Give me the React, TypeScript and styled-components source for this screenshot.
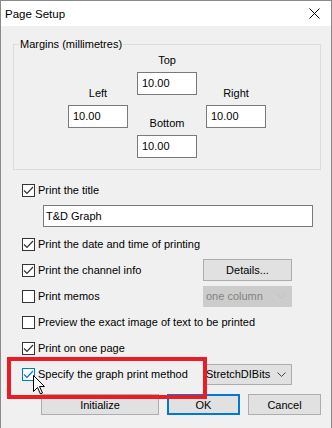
import styled, { createGlobalStyle, css } from 'styled-components';

const GlobalStyle = createGlobalStyle`
  html, body {
    margin: 0;
    padding: 0;
    background: #f0f0f0;
  }
  body {
    font-family: 'Liberation Sans', Arial, sans-serif;
    font-size: 11px;
    color: #000;
  }
`;

const CheckMark = ({ color }: { color: string }) => (
  <svg width="11" height="11" viewBox="0 0 11 11">
    <path d="M1 5.5 L4 8.5 L10 2" fill="none" stroke={color} strokeWidth="1.2" />
  </svg>
);

const Chevron = ({ color }: { color: string }) => (
  <svg width="9" height="5" viewBox="0 0 9 5">
    <path d="M0.5 0.5 L4.5 4.5 L8.5 0.5" fill="none" stroke={color} strokeWidth="1" />
  </svg>
);

type BoxProps = { checked?: boolean; hover?: boolean; label: string };

const CheckBox = ({ checked, hover, label }: BoxProps) => (
  <CheckLabel>
    <Box $hover={hover}>
      {checked && <CheckMark color={hover ? '#0078d7' : '#333'} />}
    </Box>
    {label}
  </CheckLabel>
);

const App = () => {
  return (
    <>
      <GlobalStyle />
      <Window>
        <TitleBar>
          <span>Page Setup</span>
          <CloseButton>
            <svg width="11" height="11" viewBox="0 0 11 11">
              <path d="M0.5 0.5 L10.5 10.5 M10.5 0.5 L0.5 10.5" stroke="#000" strokeWidth="1" />
            </svg>
          </CloseButton>
        </TitleBar>
        <Body>
          <GroupBox>
            <Legend>Margins (millimetres)</Legend>
            <MarginGrid>
              <SideField>
                <FieldLabel>Left</FieldLabel>
                <NumInput>10.00</NumInput>
              </SideField>
              <CenterColumn>
                <FieldLabel>Top</FieldLabel>
                <NumInput>10.00</NumInput>
                <FieldLabel $gap>Bottom</FieldLabel>
                <NumInput>10.00</NumInput>
              </CenterColumn>
              <SideField>
                <FieldLabel>Right</FieldLabel>
                <NumInput>10.00</NumInput>
              </SideField>
            </MarginGrid>
          </GroupBox>

          <Options>
            <Row>
              <CheckBox checked label="Print the title" />
            </Row>
            <TitleInput>T&amp;D Graph</TitleInput>
            <Row $first>
              <CheckBox checked label="Print the date and time of printing" />
            </Row>
            <Row>
              <CheckBox checked label="Print the channel info" />
              <PushButton>Details...</PushButton>
            </Row>
            <Row>
              <CheckBox label="Print memos" />
              <Select $disabled>
                one column
                <Chevron color="#bfbfbf" />
              </Select>
            </Row>
            <Row>
              <CheckBox label="Preview the exact image of text to be printed" />
            </Row>
            <Row>
              <CheckBox checked label="Print on one page" />
            </Row>
            <Row>
              <CheckBox checked hover label="Specify the graph print method" />
              <Select>
                StretchDIBits
                <Chevron color="#444" />
              </Select>
            </Row>
          </Options>

          <ButtonBar>
            <DialogButton $width={118}>Initialize</DialogButton>
            <DialogButton $width={73} $default>OK</DialogButton>
            <DialogButton $width={73}>Cancel</DialogButton>
          </ButtonBar>

          <Highlight />
          <Pointer>
            <svg width="13" height="20" viewBox="0 0 13 20">
              <path
                d="M0.5 0.5 L0.5 16.5 L4.5 12.5 L7.5 19 L9.5 18 L6.5 11.5 L11.5 11.5 Z"
                fill="#fff"
                stroke="#000"
                strokeWidth="1"
                strokeLinejoin="miter"
              />
            </svg>
          </Pointer>
        </Body>
      </Window>
    </>
  );
};

export default App;

const Window = styled.div`
  width: 332px;
  height: 428px;
  box-sizing: border-box;
  border: 1px solid #8a8a8a;
  border-bottom: none;
  overflow: hidden;
  display: flex;
  flex-direction: column;
  background: #f0f0f0;
`;

const TitleBar = styled.div`
  height: 25px;
  flex-shrink: 0;
  background: #fff;
  display: flex;
  align-items: center;
  justify-content: space-between;
  padding-left: 4px;
  font-size: 11.5px;
`;

const CloseButton = styled.div`
  width: 46px;
  height: 25px;
  display: flex;
  align-items: center;
  justify-content: center;
  margin-right: -6px;
`;

const Body = styled.div`
  position: relative;
  flex: 1;
  padding: 10px 10px 0 12px;
`;

const GroupBox = styled.fieldset`
  margin: 0;
  padding: 0 0 11px;
  border: 1px solid #dcdcdc;
  min-width: 0;
`;

const Legend = styled.legend`
  margin-left: 5px;
  padding: 0 1px;
  line-height: 16px;
  height: 16px;
`;

const MarginGrid = styled.div`
  display: grid;
  grid-template-columns: 60px 60px 60px;
  column-gap: 9px;
  justify-content: center;
  align-items: center;
`;

const SideField = styled.div`
  display: flex;
  flex-direction: column;
  align-items: center;
  margin-top: 3px;
`;

const CenterColumn = styled.div`
  display: flex;
  flex-direction: column;
  align-items: center;
`;

const FieldLabel = styled.div<{ $gap?: boolean }>`
  line-height: 16px;
  height: 16px;
  margin-bottom: 4px;
  margin-top: ${(p) => (p.$gap ? '20px' : '0')};
`;

const NumInput = styled.div`
  box-sizing: border-box;
  width: 60px;
  height: 23px;
  border: 1px solid #7a7a7a;
  background: #fff;
  padding: 0 4px;
  line-height: 21px;
`;

const Options = styled.div`
  display: flex;
  flex-direction: column;
  padding-top: 7px;
  padding-left: 9px;
`;

const Row = styled.div<{ $first?: boolean }>`
  height: 26px;
  display: grid;
  grid-template-columns: 181px 89px;
  align-items: center;
  margin-top: ${(p) => (p.$first ? '4px' : '0')};
`;

const CheckLabel = styled.label`
  display: flex;
  align-items: center;
  gap: 3px;
  white-space: nowrap;
  line-height: 16px;
`;

const Box = styled.span<{ $hover?: boolean }>`
  box-sizing: border-box;
  width: 13px;
  height: 13px;
  border: 1px solid ${(p) => (p.$hover ? '#0078d7' : '#333')};
  background: #fff;
  display: flex;
  align-items: center;
  justify-content: center;
  flex-shrink: 0;
`;

const TitleInput = styled.div`
  box-sizing: border-box;
  margin: 2px 0 0 21px;
  width: 270px;
  height: 22px;
  border: 1px solid #7a7a7a;
  background: #fff;
  padding: 0 2px;
  line-height: 20px;
`;

const PushButton = styled.div`
  box-sizing: border-box;
  height: 22px;
  border: 1px solid #adadad;
  background: #e1e1e1;
  text-align: center;
  line-height: 20px;
`;

const Select = styled.div<{ $disabled?: boolean }>`
  box-sizing: border-box;
  height: 21px;
  display: flex;
  align-items: center;
  justify-content: space-between;
  padding: 0 5px 0 2px;
  ${(p) =>
    p.$disabled
      ? css`
          border: 1px solid #cccccc;
          background: #cccccc;
          color: #838383;
        `
      : css`
          border: 1px solid #adadad;
          background: #e1e1e1;
          color: #000;
        `}
`;

const ButtonBar = styled.div`
  display: flex;
  justify-content: flex-end;
  gap: 8px;
  margin-top: 7px;
`;

const DialogButton = styled.div<{ $width: number; $default?: boolean }>`
  box-sizing: border-box;
  width: ${(p) => p.$width}px;
  height: 21px;
  background: #e1e1e1;
  border: ${(p) => (p.$default ? '2px solid #0078d7' : '1px solid #adadad')};
  display: flex;
  align-items: center;
  justify-content: center;
`;

const Highlight = styled.div`
  position: absolute;
  left: 6px;
  top: 331px;
  width: 200px;
  height: 42px;
  box-sizing: border-box;
  border: 4px solid #ed1c24;
  pointer-events: none;
`;

const Pointer = styled.div`
  position: absolute;
  left: 32px;
  top: 349px;
  line-height: 0;
`;
